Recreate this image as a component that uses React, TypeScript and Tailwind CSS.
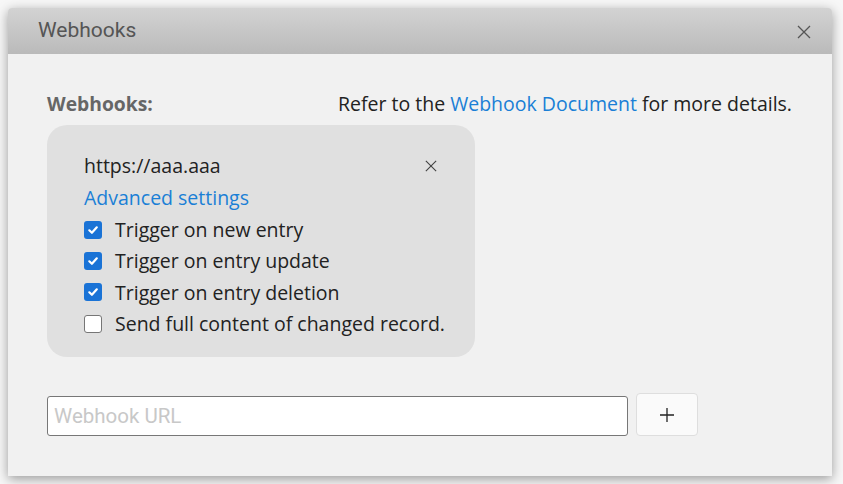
import React, { useState } from 'react';

const options = [
  { label: 'Trigger on new entry', checked: true },
  { label: 'Trigger on entry update', checked: true },
  { label: 'Trigger on entry deletion', checked: true },
  { label: 'Send full content of changed record.', checked: false },
];

const CloseIcon: React.FC<{ size: number; className?: string }> = ({ size, className }) => (
  <svg width={size} height={size} viewBox="0 0 14 14" className={className} fill="none" stroke="currentColor" strokeWidth="1.3">
    <path d="M1 1L13 13M13 1L1 13" />
  </svg>
);

const Checkbox: React.FC<{ checked: boolean; onToggle: () => void }> = ({ checked, onToggle }) => (
  <button
    type="button"
    onClick={onToggle}
    className={
      checked
        ? 'flex h-[18px] w-[18px] shrink-0 items-center justify-center rounded-[3px] bg-[#1a73d6]'
        : 'flex h-[18px] w-[18px] shrink-0 items-center justify-center rounded-[3px] border-[1.5px] border-[#767676] bg-white'
    }
  >
    {checked && (
      <svg width="12" height="12" viewBox="0 0 12 12" fill="none" stroke="white" strokeWidth="2.2" strokeLinecap="round" strokeLinejoin="round">
        <path d="M2.3 6.3L4.9 8.8L9.8 3.3" />
      </svg>
    )}
  </button>
);

export default function App() {
  const [checks, setChecks] = useState(options.map(o => o.checked));
  const [url, setUrl] = useState('');

  return (
    <div className="h-[484px] w-[843px] overflow-hidden bg-[#f7f7f7] pl-2 pt-2" style={{ fontFamily: '"Open Sans", "Noto Sans", sans-serif' }}>
      <div className="flex h-[468px] w-[824px] flex-col rounded-t-[4px] bg-[#f1f1f1] shadow-[0_3px_12px_rgba(0,0,0,0.38)]">
        <div className="flex h-[46px] items-center justify-between rounded-t-[4px] bg-gradient-to-b from-[#d3d3d3] to-[#bababa] pl-[30px] pr-[21px]">
          <h2 className="text-[21px] text-[#555]" style={{ fontFamily: 'Roboto, "Liberation Sans", sans-serif' }}>Webhooks</h2>
          <CloseIcon size={14} className="mt-[1px] text-[#555]" />
        </div>

        <div className="px-[39px] pt-[38px]">
          <div className="flex h-6 items-center justify-between pr-[1px] text-[19.5px] leading-6">
            <span className="text-[19.3px] font-bold text-[#666]">Webhooks:</span>
            <span className="text-[#222]">
              Refer to the <a className="text-[#1a7fd6]">Webhook Document</a> for more details.
            </span>
          </div>

          <div className="mt-[9px] w-[428px] rounded-[20px] bg-[#e0e0e0] pb-[18px] pl-[37px] pr-[37px] pt-[25px] text-[19.5px] text-[#222]">
            <div className="flex h-8 items-center justify-between">
              <span>https://aaa.aaa</span>
              <CloseIcon size={12} className="mr-[1px] text-[#444]" />
            </div>
            <div className="flex h-8 items-center">
              <a className="text-[#1a7fd6]">Advanced settings</a>
            </div>
            {options.map((o, i) => (
              <label key={o.label} className="flex h-[31.3px] items-center gap-[13px] whitespace-nowrap">
                <Checkbox
                  checked={checks[i]}
                  onToggle={() => setChecks(c => c.map((v, j) => (j === i ? !v : v)))}
                />
                <span>{o.label}</span>
              </label>
            ))}
          </div>

          <div className="mt-[36px] flex items-end gap-2">
            <input
              value={url}
              onChange={e => setUrl(e.target.value)}
              placeholder="Webhook URL"
              className="h-10 w-[581px] rounded-[3px] border border-[#777] bg-white px-[6px] text-[20.5px] text-[#222] outline-none placeholder:text-[#c8c8c8]"
              style={{ fontFamily: 'Roboto, "Liberation Sans", sans-serif' }}
            />
            <button type="button" className="flex h-[43px] w-[62px] items-center justify-center rounded-[4px] border border-[#dedede] bg-[#fafafa]">
              <svg width="16" height="16" viewBox="0 0 16 16" stroke="#222" strokeWidth="1.3">
                <path d="M8 1V15M1 8H15" />
              </svg>
            </button>
          </div>
        </div>
      </div>
    </div>
  );
}
